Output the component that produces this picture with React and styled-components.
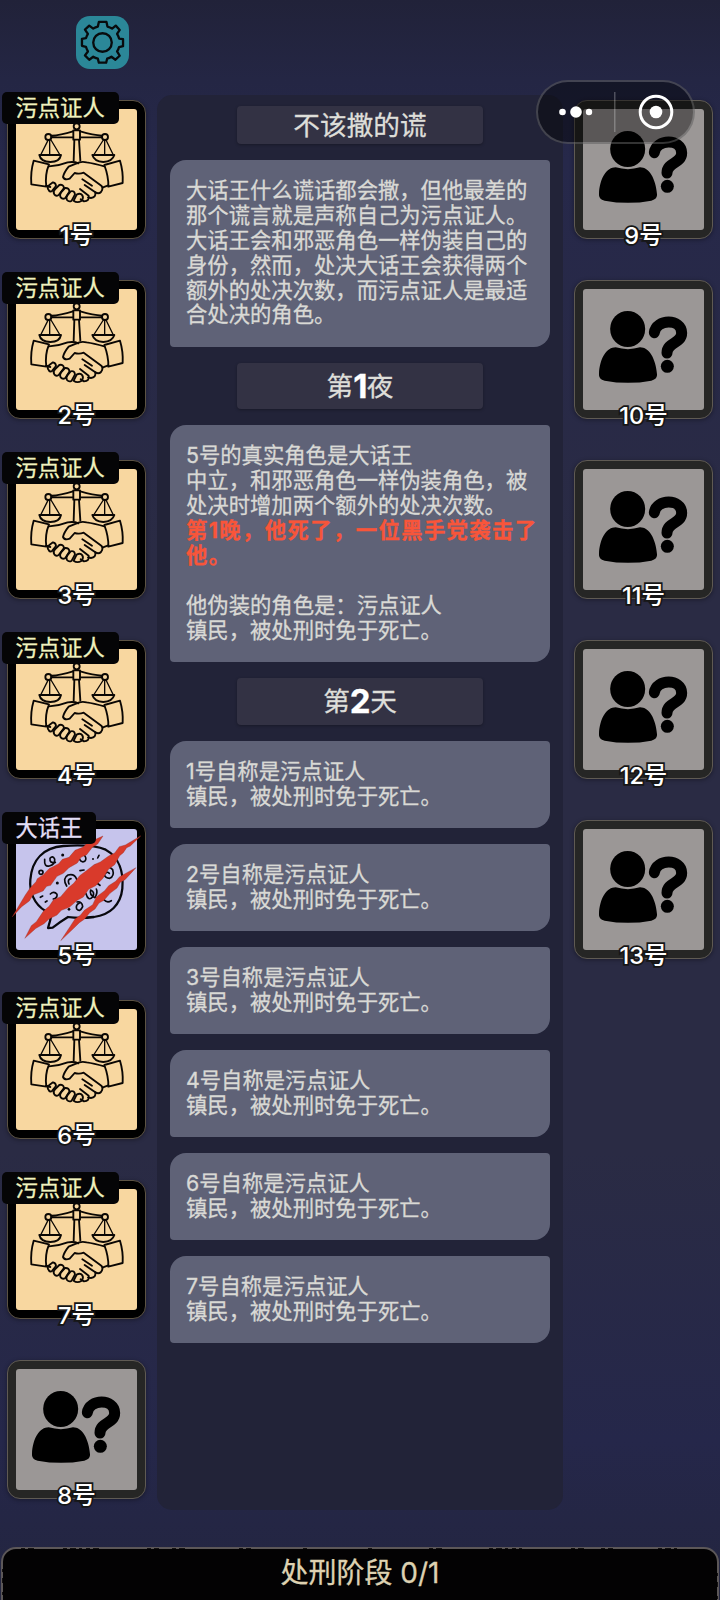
import React, { Fragment } from 'react';
import styled, { createGlobalStyle } from 'styled-components';


const GlobalStyle = createGlobalStyle`
  * {
    box-sizing: border-box;
  }
  body {
    margin: 0;
    background: #24263d;
    font-family: Inter, "Noto Sans CJK SC", sans-serif;
  }
`

const Page = styled.div`
  position: relative;
  display: flex;
  flex-direction: column;
  width: 720px;
  height: 1600px;
  overflow: hidden;
  background: linear-gradient(180deg, #212239 0%, #242644 5%, #26284a 10%, #2a2b44 35%, #2a2b44 72%, #25274a 90%, #23253f 100%);
`
const TopBar = styled.header`
  display: flex;
  flex-shrink: 0;
  height: 95px;
  padding: 16px 0 0 76px;
`
const SettingsBtn = styled.button`
  display: flex;
  width: 53px;
  height: 53px;
  padding: 0;
  border: none;
  border-radius: 14px;
  background: #2b8798;
`
const Board = styled.main`
  display: flex;
  flex-shrink: 0;
  height: 1415px;
`
const Column = styled.div`
  display: flex;
  flex-direction: column;
  gap: 41px;
  width: 157px;
  padding: 5px 0 0 ${(props) => (props.$right ? '11px' : '7px')};
`
const Tile = styled.div`
  position: relative;
  width: 139px;
  height: 139px;
  padding: 8px;
  border: 1px solid ${(props) => (props.$unknown ? '#5f5a53' : '#5c5343')};
  border-radius: 13px;
  background: ${(props) => (props.$unknown ? '#262625' : '#000')};
  box-shadow: 0 1px 4px rgba(0, 0, 0, 0.35);
`
const Portrait = styled.div`
  width: 121px;
  height: 121px;
  border-radius: 3px;
  background: ${(props) => props.$color};

  svg {
    display: block;
    width: 100%;
    height: 100%;
    overflow: visible;
  }
`
const RoleTag = styled.span`
  position: absolute;
  top: -9px;
  left: -6.5px;
  height: 32px;
  padding: 0 14px;
  border-radius: 5px;
  background: #050506;
  color: ${(props) => props.$color};
  font-size: 22.3px;
  line-height: 31px;
  white-space: nowrap;
  -webkit-text-stroke: 0.3px currentColor;
`
const Seat = styled.span`
  position: absolute;
  left: 0;
  right: 0;
  bottom: -14.5px;
  color: #fff;
  font-size: 23.5px;
  font-weight: 500;
  line-height: 34px;
  text-align: center;
  paint-order: stroke fill;
  -webkit-text-stroke: 3.5px #161616;
`
const Log = styled.section`
  display: flex;
  flex-direction: column;
  align-items: center;
  gap: 16px;
  width: 406px;
  padding-top: 11px;
  border-radius: 15px;
  background: #222338;
`
const Heading = styled.h2`
  display: flex;
  flex-shrink: 0;
  align-items: center;
  justify-content: center;
  width: 246px;
  height: ${(props) => (props.$slim ? '37.7px' : '46.8px')};
  margin: 0;
  border-radius: 4px;
  background: #333244;
  box-shadow: 0 1px 3px rgba(0, 0, 0, 0.3);
  color: #deded9;
  font-size: 26.67px;
  font-weight: 400;
  line-height: 38px;
  -webkit-text-stroke: 0.3px currentColor;

  b {
    color: #fff;
    font-size: 33px;
    font-weight: 700;
    letter-spacing: -0.5px;
  }
`
const Entry = styled.div`
  flex-shrink: 0;
  width: 380px;
  padding: 18.1px 16px 19.1px;
  border-radius: 16px 4px 16px 4px;
  background: #5f6277;
  color: #d9d9d5;
  font-size: 21.33px;
  line-height: 24.93px;
  white-space: pre;
  -webkit-text-stroke: 0.3px currentColor;
`
const Death = styled.strong`
  color: #f8553a;
  font-weight: 700;
  letter-spacing: 1.4px;
`
const Footer = styled.footer`
  position: relative;
  display: flex;
  flex-shrink: 0;
  justify-content: center;
  width: 718px;
  height: 70px;
  margin: 37px 0 0 1px;
  padding-top: 5px;
  border: 2px solid #5c5758;
  border-radius: 15px 15px 0 0;
  background: #030203;
  color: #ddd1b1;
  font-size: 28px;
  line-height: 38px;
  -webkit-text-stroke: 0.3px currentColor;
`
// worn edge of the footer frame
const Wear = styled.svg`
  position: absolute;
  top: -2px;
  left: -2px;
`
const Capsule = styled.div`
  position: absolute;
  top: 80px;
  left: 536px;
  width: 159px;
  height: 64px;
  border: 2px solid rgba(255, 255, 255, 0.2);
  border-radius: 32px;
  background: rgba(0, 0, 0, 0.42);

  svg {
    display: block;
    margin: -2px;
  }
`

const Gear = () => (
  <svg width="53" height="53" viewBox="228 48 160 160" fill="none" stroke="#080b0d" strokeWidth="7" strokeLinejoin="round">
    <path d="M297 66H320L323 80Q331 82 337 86L348 77L360 90L352 102Q356 108 358 116L370 118V139L358 142Q356 149 352 155L360 168L347 180L335 171Q329 175 322 177L319 189H297L294 177Q286 175 280 171L268 180L255 167L264 155Q260 148 258 141L246 138V117L258 115Q260 108 264 102L255 89L268 77L280 86Q287 82 294 80Z" />
    <circle cx="308" cy="128" r="28" />
  </svg>
)

const Witness = () => (
  <svg viewBox="48 327 363 363" fill="none" stroke="#0b0704" strokeWidth="5.6" strokeLinecap="round" strokeLinejoin="round">
    <circle cx="230" cy="379" r="9" />
    <path d="M220 391H240V419H220ZM223 420L221 482M237 420L241 482" />
    <path d="M154 407Q181 406 219 394M154 412H219M241 394Q280 405 306 407M241 412H306" />
    <circle cx="145" cy="411" r="9" />
    <circle cx="315" cy="411" r="9" />
    <path d="M144 421L122 465M149 421V465M153 420L180 465M310 420L281 465M314 421V465M318 420L340 465" strokeWidth="4" />
    <path d="M118 465H183Q179 486 151 486Q122 485 118 465ZM277 465H343Q337 485 310 486Q283 485 277 465Z" />
    <path d="M101 482L147 493Q134 525 139 560L94 553Q91 516 101 482ZM360 482L313 495Q326 530 325 560L368 549Q370 515 360 482Z" />
    <path d="M147 499Q178 497 203 487Q223 484 235 490M139 557L151 561" />
    <path d="M313 499Q281 490 260 487Q242 483 228 491L206 500Q192 517 189 531Q194 542 209 536L224 519Q238 523 251 518L304 557Q311 566 303 576Q296 583 286 577" />
    <path d="M325 556L309 562M254 555L286 577Q288 593 273 594L264 592M240 567L266 587Q269 604 252 604L242 598" />
    <path d="M146 570Q139 562 149 554L159 547Q168 549 168 558L157 572Q150 578 146 570Z" />
    <path d="M163 583Q158 575 165 568L178 555Q190 552 192 564L176 585Q168 590 163 583Z" />
    <path d="M182 592Q178 584 184 576L195 564Q208 563 208 575L196 594Q188 599 182 592Z" />
    <path d="M201 600Q197 593 202 586L212 574Q223 571 225 583L215 602Q207 607 201 600Z" />
    <path d="M221 602L230 584Q241 578 247 586Q252 594 244 603Q231 610 221 602Z" />
    <path d="M247 538L276 557" />
  </svg>
)

const Liar = () => (
  <svg viewBox="48 87 363 363" fill="none" stroke="#08080d" strokeLinecap="round" strokeLinejoin="round">
    <path d="M138 334C100 312 88 272 91 239C96 177 132 143 190 138C230 135 284 135 317 149C359 172 371 219 367 266C362 314 331 344 282 351Q240 356 204 351Q181 365 158 383L144 384Q151 362 154 345Z" strokeWidth="6.8" />
    <g strokeWidth="5">
      <path d="M134 178Q132 202 148 198Q166 194 164 177Q158 165 150 175Q148 191 166 187" />
      <circle cx="123" cy="217" r="6" />
      <path d="M236 170Q241 190 254 184Q263 176 250 162M200 258Q186 235 204 225Q224 220 230 238M207 252Q201 238 213 236M309 207Q326 195 338 209Q344 228 329 235Q316 234 313 224Q320 212 328 220" />
      <path d="M151 282Q162 272 171 283Q173 294 160 297M231 306Q247 304 248 320Q240 338 230 327Q226 315 238 309M258 281Q265 305 278 291Q286 276 272 270Q267 284 285 293Q294 277 289 267M312 299Q321 310 334 302" />
      <path d="M240 212L252 210M272 210L286 196M121 292L128 288M136 306L141 303M297 166L293 174M280 250Q293 248 300 256" />
    </g>
    <g fill="#08080d" stroke="none">
      <circle cx="188" cy="165" r="4.5" />
      <circle cx="279" cy="177" r="3" />
      <circle cx="172" cy="249" r="4.5" />
      <circle cx="127" cy="268" r="4" />
      <circle cx="181" cy="322" r="4" />
      <circle cx="207" cy="328" r="4" />
      <circle cx="342" cy="253" r="4" />
      <circle cx="317" cy="278" r="4" />
      <circle cx="283" cy="315" r="3" />
    </g>
    <g fill="#d93a2b" stroke="#8c2620" strokeWidth="1">
      <path d="M37 350L76 285L91 263L108 245L112 236L130 224L147 206L176 191L187 178L207 172L225 151L248 142L262 129L309 108L293 132L277 142L260 164L243 172L232 189L207 203L190 220L171 229L152 256L140 259L129 273L99 285L88 303L65 320Z" />
      <path d="M75 414L94 377L109 365L130 334L148 318L160 300L182 290L205 263L221 250L239 227L258 213L282 194L301 186L326 168L344 159L358 140L376 135L423 107L391 138L380 143L370 158L359 167L344 194L326 207L309 235L287 257L266 268L250 291L232 301L208 322L184 331L171 345L147 357L132 371L108 385Z" />
      <path d="M183 421L210 380L225 357L242 345L253 331L278 314L289 291L314 272L326 257L347 244L359 230L408 203L375 239L361 247L351 264L330 280L312 301L297 309L285 327L269 338L254 357L238 368L222 384Z" />
    </g>
  </svg>
)

const Unknown = () => (
  <svg viewBox="48 87 363 363" fill="#000">
    <ellipse cx="182" cy="207" rx="52.5" ry="54" />
    <path d="M146 262Q183 273 219 262C246 262 266 295 270 343Q272 357 253 362Q183 375 113 362Q94 358 96 342C98 295 119 262 146 262Z" />
    <path d="M262 218C267 176 344 175 344 219C344 251 300 246 300 279" fill="none" stroke="#000" strokeWidth="33" strokeLinecap="round" />
    <circle cx="301" cy="319" r="19.5" />
  </svg>
)

const roles = {
  witness: { name: '污点证人', color: '#f0f2be', bg: '#f8d7a0', Icon: Witness },
  liar: { name: '大话王', color: '#e2def6', bg: '#c6c4ec', Icon: Liar },
  unknown: { bg: '#9b9796', Icon: Unknown },
}

const leftSeats = ['witness', 'witness', 'witness', 'witness', 'liar', 'witness', 'witness', 'unknown']
const rightSeats = ['unknown', 'unknown', 'unknown', 'unknown', 'unknown']
const claims = [1, 2, 3, 4, 6, 7]

const Player = ({ seat, role }) => {
  const { name, color, bg, Icon } = roles[role]
  return (
    <Tile $unknown={!name}>
      <Portrait $color={bg}><Icon /></Portrait>
      {name && <RoleTag $color={color}>{name}</RoleTag>}
      <Seat>{seat}号</Seat>
    </Tile>
  )
}

const App = () => (
  <Fragment>
    <GlobalStyle />
    <Page>
      <TopBar>
        <SettingsBtn aria-label="设置"><Gear /></SettingsBtn>
      </TopBar>
      <Board>
        <Column>
          {leftSeats.map((role, i) => <Player key={i} seat={i + 1} role={role} />)}
        </Column>
        <Log>
          <Heading $slim>不该撒的谎</Heading>
          <Entry>
            {'大话王什么谎话都会撒，但他最差的\n那个谎言就是声称自己为污点证人。\n大话王会和邪恶角色一样伪装自己的\n身份，然而，处决大话王会获得两个\n额外的处决次数，而污点证人是最适\n合处决的角色。'}
          </Entry>
          <Heading>第<b>1</b>夜</Heading>
          <Entry>
            {'5号的真实角色是大话王\n中立，和邪恶角色一样伪装角色，被\n处决时增加两个额外的处决次数。\n'}
            <Death>{'第1晚，他死了，一位黑手党袭击了\n他。'}</Death>
            {'\n\n他伪装的角色是：污点证人\n镇民，被处刑时免于死亡。'}
          </Entry>
          <Heading>第<b>2</b>天</Heading>
          {claims.map((n) => (
            <Entry key={n}>{`${n}号自称是污点证人\n镇民，被处刑时免于死亡。`}</Entry>
          ))}
        </Log>
        <Column $right>
          {rightSeats.map((role, i) => <Player key={i} seat={i + 9} role={role} />)}
        </Column>
      </Board>
      <Footer>
        处刑阶段 0/1
        <Wear width="718" height="60" fill="none" stroke="#030203">
          <path d="M20 1.7H34M62 1.7H101M146 1.7H158M171 1.7H184M238 1.7H250M302 1.7H306M367 1.7H372M428 1.7H441M488 1.7H521M570 1.7H584M600 1.7H612M657 1.7H676" strokeDasharray="4 3 6 3 3 4" />
          <path d="M1.7 22V60M716.3 26V60" strokeDasharray="3 6 5 9" />
        </Wear>
      </Footer>
      <Capsule>
        <svg width="159" height="64" viewBox="0 0 159 64" fill="#fff">
          <circle cx="26.5" cy="32" r="3.3" />
          <circle cx="40" cy="32" r="5.8" />
          <circle cx="53" cy="32" r="3.2" />
          <rect x="78" y="12" width="1.5" height="40" fillOpacity="0.25" />
          <circle cx="120" cy="32" r="15.8" fill="none" stroke="#fff" strokeWidth="3" />
          <circle cx="120" cy="32" r="6.3" />
        </svg>
      </Capsule>
    </Page>
  </Fragment>
)

export default App;
